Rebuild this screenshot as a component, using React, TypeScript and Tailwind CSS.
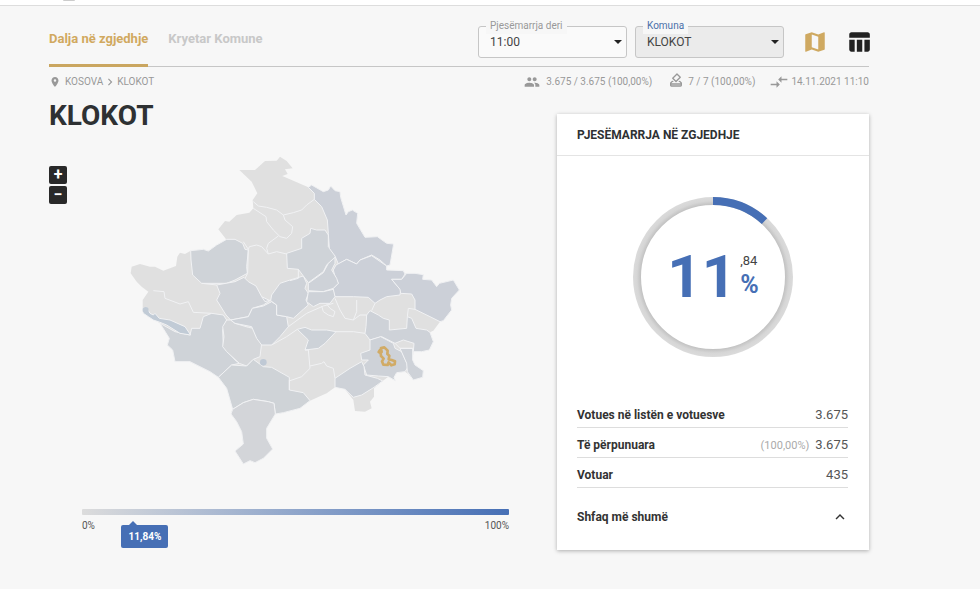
import { ReactNode } from 'react'
import {
    MdChevronRight,
    MdCompareArrows,
    MdExpandLess,
    MdMap,
    MdOutlineHowToVote,
    MdPeople,
    MdRoom,
    MdTableChart,
} from 'react-icons/md'

const OUTLINE =
    '358,60 405,60 435,33 470,32 480,20 500,33 518,55 495,58 503,72 487,78 520,92 565,112 575,105 610,125 625,120 632,108 645,122 660,125 662,142 678,195 685,185 697,180 713,190 710,220 735,262 772,260 800,280 821,282 810,345 800,348 800,360 845,362 858,372 885,370 910,374 908,388 935,390 950,410 958,400 1000,390 1018,420 995,445 992,465 995,480 970,512 960,515 940,542 930,547 940,575 928,600 905,605 880,605 878,630 885,645 910,662 908,682 880,690 865,672 855,665 830,668 822,682 826,692 805,680 788,693 762,715 762,740 750,755 755,775 735,785 705,783 700,750 675,718 645,712 620,730 570,752 540,775 510,783 490,788 466,792 440,835 440,865 458,897 430,925 405,938 390,932 370,942 345,903 370,882 365,845 350,815 333,792 338,775 320,715 295,682 270,665 210,635 165,635 158,600 142,585 148,565 120,520 85,498 68,485 68,450 85,425 65,410 50,395 32,370 35,350 60,342 90,350 105,350 130,362 168,348 172,320 180,308 195,312 212,302 250,298 265,303 290,285 320,270 295,238 315,213 328,215 350,195 388,188 400,175 398,150 412,130 395,95'

// Municipalities that stand out from the base colour
const REGIONS = [
    { fill: '#cfd3d8', points: '212,302 250,298 265,303 290,285 320,268 345,268 368,280 375,298 385,300 380,350 382,370 345,390 320,400 245,400 218,375 213,330' },
    { fill: '#d0d3d8', points: '290,405 345,395 372,382 385,395 408,408 425,440 450,452 430,465 397,475 385,500 332,510 318,495 290,450 300,430' },
    { fill: '#cfd3d8', points: '275,490 310,495 320,510 308,540 310,590 345,630 358,640 335,645 295,682 270,665 210,635 165,635 158,600 142,585 148,565 120,520 165,545 210,555 215,535 240,535 250,500' },
    { fill: '#d5d7da', points: '332,510 345,520 385,532 400,535 425,580 420,620 400,628 380,648 358,640 320,605 308,590 312,560 308,530 320,510' },
    { fill: '#ced2d8', points: '332,510 385,500 397,475 430,468 455,455 470,465 470,495 500,500 505,530 480,560 455,585 425,585 410,565 395,530 345,520' },
    { fill: '#ced2d8', points: '455,435 480,400 510,390 550,378 560,400 555,415 565,430 558,450 565,465 550,478 520,505 500,500 470,495 470,465 452,452' },
    { fill: '#cfd3d8', points: '500,310 545,295 545,265 570,250 572,235 590,240 615,240 625,255 625,290 645,310 648,320 630,335 620,345 610,365 565,398 550,378 535,358 502,355' },
    { fill: '#ccd0d8', points: '565,112 575,105 610,125 625,120 632,108 645,122 660,125 662,142 678,195 685,185 697,180 713,190 710,220 735,262 772,260 800,280 821,282 810,345 800,348 780,330 755,315 720,330 710,342 680,328 655,342 645,318 628,295 625,250 622,210 605,170 583,148 583,130' },
    { fill: '#ccd0d8', points: '648,345 680,328 710,342 720,330 755,317 800,348 800,360 850,362 855,372 845,388 815,388 842,420 840,435 800,440 780,450 765,460 745,442 700,440 645,440 640,425 640,415 655,400 645,380 640,360' },
    { fill: '#ced2d8', points: '565,400 610,368 625,340 645,322 645,340 635,360 650,385 655,400 640,415 610,425 565,422' },
    { fill: '#ced2d8', points: '565,425 610,425 640,418 645,440 630,460 600,460 580,470 560,455' },
    { fill: '#ccd0d8', points: '815,388 845,388 860,370 885,370 910,374 908,388 935,390 950,410 958,400 1000,390 1018,420 995,445 992,465 995,480 970,512 960,515 930,500 885,478 885,450 875,432 842,430 840,418' },
    { fill: '#ced2d8', points: '740,495 750,482 775,495 790,505 808,510 808,540 860,535 862,500 875,505 888,535 920,540 930,547 940,575 928,600 905,605 880,605 882,580 850,570 825,580 785,560 750,570 735,550 738,530' },
    { fill: '#ced2d8', points: '750,570 782,560 820,580 825,595 845,605 865,650 855,665 830,668 822,682 826,692 805,680 775,678 740,675 730,645 745,630 725,630 722,610 750,600' },
    { fill: '#ced2d8', points: '840,595 878,595 878,630 885,645 910,662 908,682 880,690 862,665 860,640' },
    { fill: '#ced2d8', points: '645,685 690,655 725,635 732,650 735,675 772,685 788,693 762,712 725,735 700,742 675,718 645,712' },
    { fill: '#cdd2d8', points: '532,538 555,532 575,540 620,540 648,545 615,580 595,595 555,600 565,570' },
    { fill: '#cfd3d7', points: '295,682 335,645 380,648 400,628 430,650 455,652 508,682 508,720 550,728 570,752 540,775 490,788 466,792 462,760 445,755 400,748 370,758 338,778 320,715' },
    { fill: '#d3d5d9', points: '338,778 370,758 400,748 445,755 462,760 466,792 440,835 440,865 458,897 430,925 405,938 390,932 370,942 345,903 370,882 365,845 350,815 333,792' },
    { fill: '#c1cbd6', points: '68,475 80,472 90,490 100,495 105,490 118,505 150,510 195,530 212,555 180,550 140,525 120,517 100,510 85,500 70,490' },
]

// Borders between the municipalities that keep the base colour
const BORDERS = [
    '400,155 415,168 440,172 470,180 490,195 520,188 545,180 560,165 583,148',
    '400,175 438,200 440,215 460,240 480,260 500,265 515,250 518,230 495,210 490,195',
    '475,258 445,280 440,295 445,312 425,290 410,285 388,290 385,298 370,275',
    '445,312 470,305 500,312',
    '385,298 383,370 375,385',
    '535,358 535,385 510,392',
    '425,440 435,455 452,450',
    '100,422 132,425 135,445 180,462 205,455 220,487 275,490',
    '245,400 290,405',
    '505,530 560,490 610,468 640,460',
    '605,468 610,485 625,495 640,500 645,485 630,475 620,462',
    '645,445 660,480 675,505 700,510 710,485 710,450',
    '700,510 720,495 740,495',
    '765,460 755,482',
    '648,545 700,545 735,550',
    '455,585 500,560 532,538',
    '510,692 545,680 570,655 565,600 555,600',
    '570,648 605,640 612,635 620,648 640,655 645,685',
    '508,720 508,690',
    '885,478 865,475 862,500',
    '825,580 840,595 878,595',
]

function KosovoMap() {
    return (
        <svg viewBox="0 0 1050 960" className="w-[350px] max-w-full" role="img" aria-label="Kosova">
            <polygon points={OUTLINE} fill="#e0e0e0" />
            <g stroke="#f1f2f4" strokeWidth="3" strokeLinejoin="round">
                {REGIONS.map((region) => (
                    <polygon key={region.points} points={region.points} fill={region.fill} />
                ))}
                {BORDERS.map((points) => (
                    <polyline key={points} points={points} fill="none" />
                ))}
            </g>
            <circle cx="430" cy="637" r="10" fill="#bfc9d5" />
            <circle cx="77" cy="480" r="9" fill="#c1cbd6" />
            <polygon
                points="780,600 785,606 783,594 793,592 803,602 802,612 808,617 806,628 815,630 825,634 824,643 814,646 806,637 803,645 790,644 786,634 791,626 783,618 782,609 776,606"
                fill="#ced2d8"
                stroke="#d1ab66"
                strokeWidth="8"
                strokeLinejoin="round"
            />
        </svg>
    )
}

type FilterProps = {
    id: string
    label: string
    value: string
    active?: boolean
}

function Filter({ id, label, value, active }: FilterProps) {
    return (
        <div className="relative w-[149px]">
            <label
                htmlFor={id}
                className={`absolute -top-2 left-2 px-1 text-[10px] leading-4 bg-[#f7f7f7] ${
                    active ? 'text-[#4a6fa9]' : 'text-[#999]'
                }`}
            >
                {label}
            </label>
            <select
                id={id}
                className={`w-full h-8 pl-[11px] pr-6 appearance-none rounded-[3px] border border-[#c6c6c6] text-[12px] text-[#444] ${
                    active ? 'bg-[#ebebeb]' : 'bg-[#fafafa]'
                }`}
            >
                <option>{value}</option>
            </select>
            <svg viewBox="0 0 8 4" className="absolute right-[5px] top-[14px] w-2 h-1 pointer-events-none">
                <path d="M0 0h8L4 4z" fill="#222" />
            </svg>
        </div>
    )
}

function Turnout() {
    const radius = 76
    const length = 2 * Math.PI * radius

    return (
        <div className="grid place-items-center pt-10">
            <svg viewBox="0 0 162 162" className="col-start-1 row-start-1 size-[162px]" fill="none">
                <defs>
                    <radialGradient id="ring" gradientUnits="userSpaceOnUse" cx="81" cy="81" r="81">
                        <stop offset="0.88" stopColor="#bdbdbd" />
                        <stop offset="0.94" stopColor="#d6d6d6" />
                        <stop offset="1" stopColor="#dcdcdc" />
                    </radialGradient>
                </defs>
                <circle cx="81" cy="81" r={radius} stroke="url(#ring)" strokeWidth="8" />
                <circle
                    cx="81"
                    cy="81"
                    r={radius}
                    stroke="#466fb5"
                    strokeWidth="8"
                    strokeDasharray={`${length * 0.1184} ${length}`}
                    transform="rotate(-90 81 81)"
                />
            </svg>
            <div className="col-start-1 row-start-1 flex items-center gap-1">
                <span className="text-[60px] leading-none font-bold text-[#466fb5]">11</span>
                <span className="flex flex-col pb-1">
                    <span className="text-[13px] leading-5 text-[#444]">,84</span>
                    <span className="text-[25px] leading-7 font-bold text-[#466fb5]">%</span>
                </span>
            </div>
        </div>
    )
}

function Row({ label, children }: { label: string; children: ReactNode }) {
    return (
        <div className="flex items-center justify-between border-b border-[#ddd] pt-1 h-[30px]">
            <dt className="text-[12px] font-bold text-[#333]">{label}</dt>
            <dd className="text-[13px] text-[#555]">{children}</dd>
        </div>
    )
}

function App() {
    return (
        <div className="min-h-screen bg-[#f7f7f7] font-['Roboto',sans-serif] text-[#2e3133]">
            <div className="h-[6px] bg-white border-b border-[#ddd] pl-[63px]">
                <div className="w-3 h-[1px] rounded-b-full bg-[#ccc]" />
            </div>
            <main className="pl-[49px] pr-[111px]">
                <header className="flex items-start border-b border-[#c6c6c6] h-[61px]">
                    <nav className="flex gap-5 text-[13px] font-bold leading-5">
                        <a href="#dalja" className="h-[61px] pt-[23px] border-b-[3px] border-[#caa660] text-[#d1a95f]">
                            Dalja në zgjedhje
                        </a>
                        <a href="#kryetar" className="pt-[23px] text-[#c8c8c8]">
                            Kryetar Komune
                        </a>
                    </nav>
                    <div className="ml-auto -mr-[3px] flex items-center pt-5">
                        <div className="flex gap-2">
                            <Filter id="ora" label="Pjesëmarrja deri" value="11:00" />
                            <Filter id="komuna" label="Komuna" value="KLOKOT" active />
                        </div>
                        <button type="button" aria-label="Harta" className="ml-[18px]">
                            <MdMap className="size-[26px] text-[#cfa961]" />
                        </button>
                        <button type="button" aria-label="Tabela" className="ml-[18px]">
                            <MdTableChart className="size-[26px] text-[#222]" />
                        </button>
                    </div>
                </header>

                <div className="flex items-center justify-between pt-[5px] text-[10px] leading-5 text-[#999]">
                    <nav className="flex items-center">
                        <MdRoom className="size-3 mr-1" />
                        <a href="#kosova">KOSOVA</a>
                        <MdChevronRight className="size-[14px]" />
                        <a href="#klokot">KLOKOT</a>
                    </nav>
                    <div className="flex items-center">
                        <MdPeople className="size-4 mr-[6px]" />
                        <span>3.675 / 3.675 (100,00%)</span>
                        <MdOutlineHowToVote className="size-4 ml-4 mb-1 mr-1" />
                        <span>7 / 7 (100,00%)</span>
                        <MdCompareArrows className="size-5 ml-[14px] mr-[2px]" />
                        <span>14.11.2021 11:10</span>
                    </div>
                </div>

                <div className="flex items-start justify-between">
                    <section className="flex-1">
                        <h1 className="pt-1 text-[28px] leading-10 font-bold">KLOKOT</h1>
                        <div className="flex items-start pt-[14px]">
                            <div className="flex flex-col gap-[2px] pt-4">
                                <button
                                    type="button"
                                    className="grid place-items-center size-[18px] rounded-[2px] bg-[#292929] text-white text-[16px] leading-none font-bold"
                                >
                                    +
                                </button>
                                <button
                                    type="button"
                                    className="grid place-items-center size-[18px] rounded-[2px] bg-[#292929] text-white text-[16px] leading-none font-bold"
                                >
                                    −
                                </button>
                            </div>
                            <div className="flex-1 pl-[53px]">
                                <KosovoMap />
                            </div>
                        </div>
                        <div className="ml-[33px] mr-12 pt-[39px] text-[10px] leading-4 text-[#555]">
                            <div className="h-[6px] rounded-[1px] bg-gradient-to-r from-[#dcdcdc] to-[#466fb5]" />
                            <div className="relative flex justify-between pt-[3px]">
                                <span>0%</span>
                                <span>100%</span>
                                <div className="absolute left-[9%] top-[10px] ml-px w-[47px] h-[23px] rounded-[2px] bg-[#466fb5] text-white text-center leading-[23px] font-bold">
                                    <span className="absolute -top-1 left-2 border-x-4 border-b-4 border-x-transparent border-b-[#466fb5]" />
                                    11,84%
                                </div>
                            </div>
                        </div>
                    </section>

                    <section className="mt-[22px] w-[312px] h-[436px] bg-white shadow-[0_1px_4px_rgba(0,0,0,0.3)]">
                        <h2 className="h-[42px] px-5 leading-[42px] text-[12px] font-bold border-b border-[#e4e4e4]">
                            PJESËMARRJA NË ZGJEDHJE
                        </h2>
                        <Turnout />
                        <dl className="ml-5 mr-[21px] mt-10">
                            <Row label="Votues në listën e votuesve">3.675</Row>
                            <Row label="Të përpunuara">
                                <span className="mr-[6px] text-[11px] text-[#aaa]">(100,00%)</span>
                                3.675
                            </Row>
                            <Row label="Votuar">435</Row>
                        </dl>
                        <div className="px-5 pt-5">
                            <button type="button" className="flex w-full items-center justify-between text-[12px] leading-4 font-bold text-[#333]">
                                Shfaq më shumë
                                <MdExpandLess className="size-[18px]" />
                            </button>
                        </div>
                    </section>
                </div>
            </main>
        </div>
    )
}

export default App
